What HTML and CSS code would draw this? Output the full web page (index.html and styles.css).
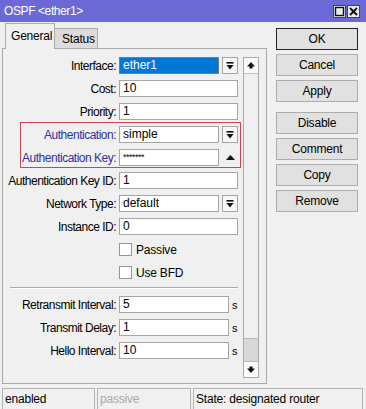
FILE: index.html
```html
<!DOCTYPE html>
<html lang="en">
<head>
  <meta charset="UTF-8" />
  <title>OSPF &lt;ether1&gt;</title>
  <link rel="stylesheet" href="styles.css">
</head>
<body>
  <div class="window">
    <div class="titlebar">
      <span class="title">OSPF &lt;ether1&gt;</span>
      <div class="title-btns">
        <span class="tbtn">
          <svg width="13" height="13" viewBox="0 0 13 13"><rect x="0.5" y="0.5" width="12" height="12" fill="#ececec" stroke="#444"/><rect x="2.5" y="2.5" width="8" height="8" fill="none" stroke="#111" stroke-width="1.4"/></svg>
        </span>
        <span class="tbtn">
          <svg width="13" height="13" viewBox="0 0 13 13"><rect x="0.5" y="0.5" width="12" height="12" fill="#ececec" stroke="#444"/><path d="M3 3 L10 10 M10 3 L3 10" stroke="#111" stroke-width="2"/></svg>
        </span>
      </div>
    </div>

    <div class="main">
      <div class="left">
        <div class="tabs">
          <div class="tab active">General</div>
          <div class="tab">Status</div>
        </div>
        <div class="panel">
          <div class="form">
            <div class="row">
              <span class="label">Interface:</span>
              <div class="field">
                <div class="input short selected">ether1</div>
                <span class="drop"><svg width="8" height="8" viewBox="0 0 8 8"><rect x="0.5" y="0" width="7" height="1.6" fill="#111"/><polygon points="0.5,3 7.5,3 4,7.5" fill="#111"/></svg></span>
              </div>
            </div>
            <div class="row">
              <span class="label">Cost:</span>
              <div class="field"><div class="input">10</div></div>
            </div>
            <div class="row">
              <span class="label">Priority:</span>
              <div class="field"><div class="input">1</div></div>
            </div>

            <div class="group">
              <div class="row">
                <span class="label hl">Authentication:</span>
                <div class="field">
                  <div class="input short">simple</div>
                  <span class="drop"><svg width="8" height="8" viewBox="0 0 8 8"><rect x="0.5" y="0" width="7" height="1.6" fill="#111"/><polygon points="0.5,3 7.5,3 4,7.5" fill="#111"/></svg></span>
                </div>
              </div>
              <div class="row">
                <span class="label hl">Authentication Key:</span>
                <div class="field">
                  <div class="input short pw">*******</div>
                  <span class="collapse"><svg width="9" height="5" viewBox="0 0 9 5"><polygon points="0,5 9,5 4.5,0" fill="#111"/></svg></span>
                </div>
              </div>
            </div>

            <div class="row">
              <span class="label">Authentication Key ID:</span>
              <div class="field"><div class="input">1</div></div>
            </div>
            <div class="row">
              <span class="label">Network Type:</span>
              <div class="field">
                <div class="input short">default</div>
                <span class="drop"><svg width="8" height="8" viewBox="0 0 8 8"><rect x="0.5" y="0" width="7" height="1.6" fill="#111"/><polygon points="0.5,3 7.5,3 4,7.5" fill="#111"/></svg></span>
              </div>
            </div>
            <div class="row">
              <span class="label">Instance ID:</span>
              <div class="field"><div class="input">0</div></div>
            </div>
            <div class="row check-row">
              <span class="checkbox"></span>
              <span>Passive</span>
            </div>
            <div class="row check-row">
              <span class="checkbox"></span>
              <span>Use BFD</span>
            </div>

            <div class="separator"></div>

            <div class="row">
              <span class="label">Retransmit Interval:</span>
              <div class="field"><div class="input unit">5</div><span class="suffix">s</span></div>
            </div>
            <div class="row">
              <span class="label">Transmit Delay:</span>
              <div class="field"><div class="input unit">1</div><span class="suffix">s</span></div>
            </div>
            <div class="row">
              <span class="label">Hello Interval:</span>
              <div class="field"><div class="input unit">10</div><span class="suffix">s</span></div>
            </div>
          </div>

          <div class="scrollbar">
            <div class="sb-btn top"><svg width="8" height="7" viewBox="0 0 8 7"><polygon points="0,4.5 4,0 8,4.5" fill="#111"/><rect x="2.5" y="4" width="3" height="2.5" fill="#111"/></svg></div>
            <div class="sb-track"></div>
            <div class="sb-thumb"></div>
            <div class="sb-btn bottom"><svg width="8" height="7" viewBox="0 0 8 7"><rect x="2.5" y="0.5" width="3" height="2.5" fill="#111"/><polygon points="0,2.5 8,2.5 4,7" fill="#111"/></svg></div>
          </div>
        </div>
      </div>

      <div class="buttons">
        <button class="btn default">OK</button>
        <button class="btn">Cancel</button>
        <button class="btn">Apply</button>
        <button class="btn spaced">Disable</button>
        <button class="btn">Comment</button>
        <button class="btn">Copy</button>
        <button class="btn">Remove</button>
      </div>
    </div>

    <div class="statusbar">
      <div class="status s1">enabled</div>
      <div class="status s2 dim">passive</div>
      <div class="status s3">State: designated router</div>
    </div>
  </div>
</body>
</html>
```

FILE: styles.css
```css
body {
  margin: 0;
  font-family: "Liberation Sans", Arial, sans-serif;
  font-size: 11px;
  color: #000;
  background: #f0f0f0;
}
.window {
  width: 366px;
  height: 409px;
  display: flex;
  flex-direction: column;
  background: #f0f0f0;
  overflow: hidden;
}
.titlebar {
  height: 22px;
  flex: none;
  background: #6a69d6;
  color: #fff;
  display: flex;
  align-items: center;
  justify-content: space-between;
  padding: 0 6px 0 4px;
  font-size: 12px;
  letter-spacing: -0.4px;
}
.title-btns {
  display: flex;
  gap: 1px;
}
.tbtn {
  display: flex;
}
.main {
  display: flex;
  height: 364px;
}
.left {
  width: 265px;
  margin-left: 2px;
  display: flex;
  flex-direction: column;
}

/* tabs */
.tabs {
  height: 26px;
  display: flex;
  align-items: flex-end;
  padding-left: 3px;
}
.tab {
  box-sizing: border-box;
  height: 20px;
  width: 43px;
  padding-left: 7px;
  line-height: 20px;
  background: #dcdcdc;
  border: 1px solid #adadad;
  border-left: none;
  border-bottom: none;
  font-size: 12px;
  letter-spacing: -0.2px;
}
.tab.active {
  height: 26px;
  width: 50px;
  padding-left: 5px;
  line-height: 24px;
  margin-bottom: -1px;
  background: #f0f0f0;
  border-left: 1px solid #adadad;
  position: relative;
  z-index: 1;
}
.panel {
  box-sizing: border-box;
  height: 336px;
  border: 1px solid #a9a9a9;
  padding-top: 8px;
  display: flex;
  align-items: flex-start;
}

/* form rows */
.form {
  width: 235px;
}
.row {
  display: flex;
  align-items: center;
  height: 17px;
  margin-bottom: 6px;
}
.label {
  width: 113px;
  margin-right: 3px;
  text-align: right;
  white-space: nowrap;
  font-size: 12px;
  letter-spacing: -0.5px;
}
.label.hl {
  color: #2f2fa6;
}
.field {
  display: flex;
  align-items: center;
  width: 119px;
  height: 17px;
}
.input {
  box-sizing: border-box;
  width: 119px;
  height: 17px;
  border: 1px solid #a5a5a5;
  background: #fff;
  padding-left: 3px;
  line-height: 15px;
  font-size: 12px;
  white-space: nowrap;
}
.input.short {
  width: 100px;
}
.input.unit {
  width: 110px;
}
.input.selected {
  background: #0078d7;
  color: #fff;
  border-color: #7a7a7a;
}
.input.pw {
  font-size: 9px;
  letter-spacing: -0.5px;
}
.drop {
  box-sizing: border-box;
  width: 16px;
  height: 17px;
  margin-left: 3px;
  border: 1px solid #a5a5a5;
  background: #f7f7f7;
  display: flex;
  align-items: center;
  justify-content: center;
}
.collapse {
  width: 16px;
  margin-left: 3px;
  display: flex;
  justify-content: center;
}
.suffix {
  margin-left: 3px;
  font-size: 11px;
}
.group {
  position: relative;
}
.group::before {
  content: "";
  position: absolute;
  top: -4px;
  bottom: -2px;
  left: 17px;
  right: -3px;
  border: 1px solid #d0454f;
}
.check-row {
  padding-left: 116px;
  gap: 4px;
  font-size: 12px;
  letter-spacing: -0.2px;
}
.checkbox {
  box-sizing: border-box;
  width: 13px;
  height: 13px;
  border: 1px solid #959595;
  background: #fff;
}
.separator {
  height: 1px;
  width: 228px;
  margin: 0 0 7px 7px;
  background: #a9a9a9;
  border-bottom: 1px solid #fff;
}

/* scrollbar */
.scrollbar {
  box-sizing: border-box;
  width: 16px;
  height: 321px;
  margin-left: 5px;
  border: 1px solid #a9a9a9;
  display: flex;
  flex-direction: column;
  background: #f0f0f0;
}
.sb-btn {
  height: 15px;
  flex: none;
  background: #fbfbfb;
  display: flex;
  align-items: center;
  justify-content: center;
}
.sb-btn.top {
  border-bottom: 1px solid #c2c2c2;
}
.sb-track {
  flex: 1;
}
.sb-thumb {
  height: 22px;
  background: #d8d8d8;
  border-top: 1px solid #b8b8b8;
  border-bottom: 1px solid #b8b8b8;
}

/* action buttons */
.buttons {
  width: 82px;
  margin: 6px 0 0 9px;
  display: flex;
  flex-direction: column;
  gap: 4px;
}
.btn {
  box-sizing: border-box;
  height: 22px;
  margin: 0;
  padding: 0;
  background: #e1e1e1;
  border: 1px solid #adadad;
  font-family: "Liberation Sans", Arial, sans-serif;
  font-size: 12px;
  letter-spacing: -0.2px;
  color: #000;
}
.btn.default {
  border: 1px solid #222;
}
.btn.spaced {
  margin-top: 6px;
}

/* status bar */
.statusbar {
  flex: 1;
  display: flex;
  gap: 2px;
  padding: 2px 0 0 2px;
}
.status {
  box-sizing: border-box;
  border: 1px solid #b4b4b4;
  border-bottom: none;
  padding: 3px 0 0 2px;
  font-size: 12px;
  letter-spacing: -0.2px;
}
.s1 { width: 93px; }
.s2 { width: 94px; }
.s3 { width: 170px; }
.dim {
  color: #a8a8a8;
}
```
